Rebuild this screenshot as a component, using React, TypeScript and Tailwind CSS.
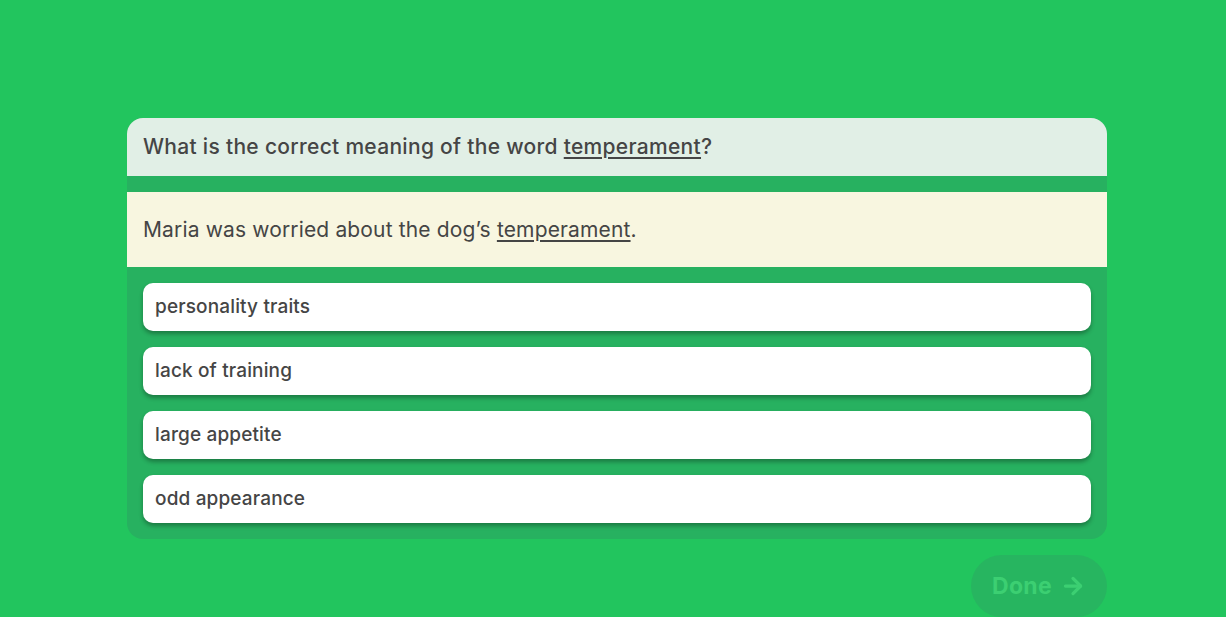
import { ArrowRight } from "lucide-react";

const options = ["personality traits", "lack of training", "large appetite", "odd appearance"];

export default function App() {
  return (
    <div className="min-h-[617px] bg-[#22c55e] pt-[118px] font-['Inter','Noto_Sans',sans-serif] text-[#454545]">
      <div className="ml-[127px] w-[980px] overflow-hidden rounded-2xl bg-[#27b160]">
        <div className="flex h-[58px] items-center bg-[#e1efe6] px-4 text-[21px] font-medium tracking-[0.3px]">
          <span>
            What is the correct meaning of the word <span className="underline underline-offset-[3px]">temperament</span>?
          </span>
        </div>
        <div className="mt-4 flex h-[75px] items-center bg-[#f8f6e0] px-4 text-[21px] tracking-[0.15px]">
          <span>
            Maria was worried about the dog’s <span className="underline underline-offset-[3px]">temperament</span>.
          </span>
        </div>
        <div className="flex flex-col gap-4 p-4">
          {options.map((o) => (
            <button
              key={o}
              className="flex h-12 items-center rounded-[10px] bg-white px-3 text-left text-[19px] font-medium tracking-[0.15px] shadow-[0_3px_4px_rgba(0,0,0,0.3)]"
            >
              {o}
            </button>
          ))}
        </div>
      </div>
      <div className="ml-[127px] mt-4 flex w-[980px] justify-end">
        <button className="flex h-[62px] w-[136px] items-center justify-center gap-2 rounded-full bg-[#27b560] text-[23px] font-bold tracking-[0.3px] text-[#3ccf72]">
          Done <ArrowRight size={26} strokeWidth={3} />
        </button>
      </div>
    </div>
  );
}
